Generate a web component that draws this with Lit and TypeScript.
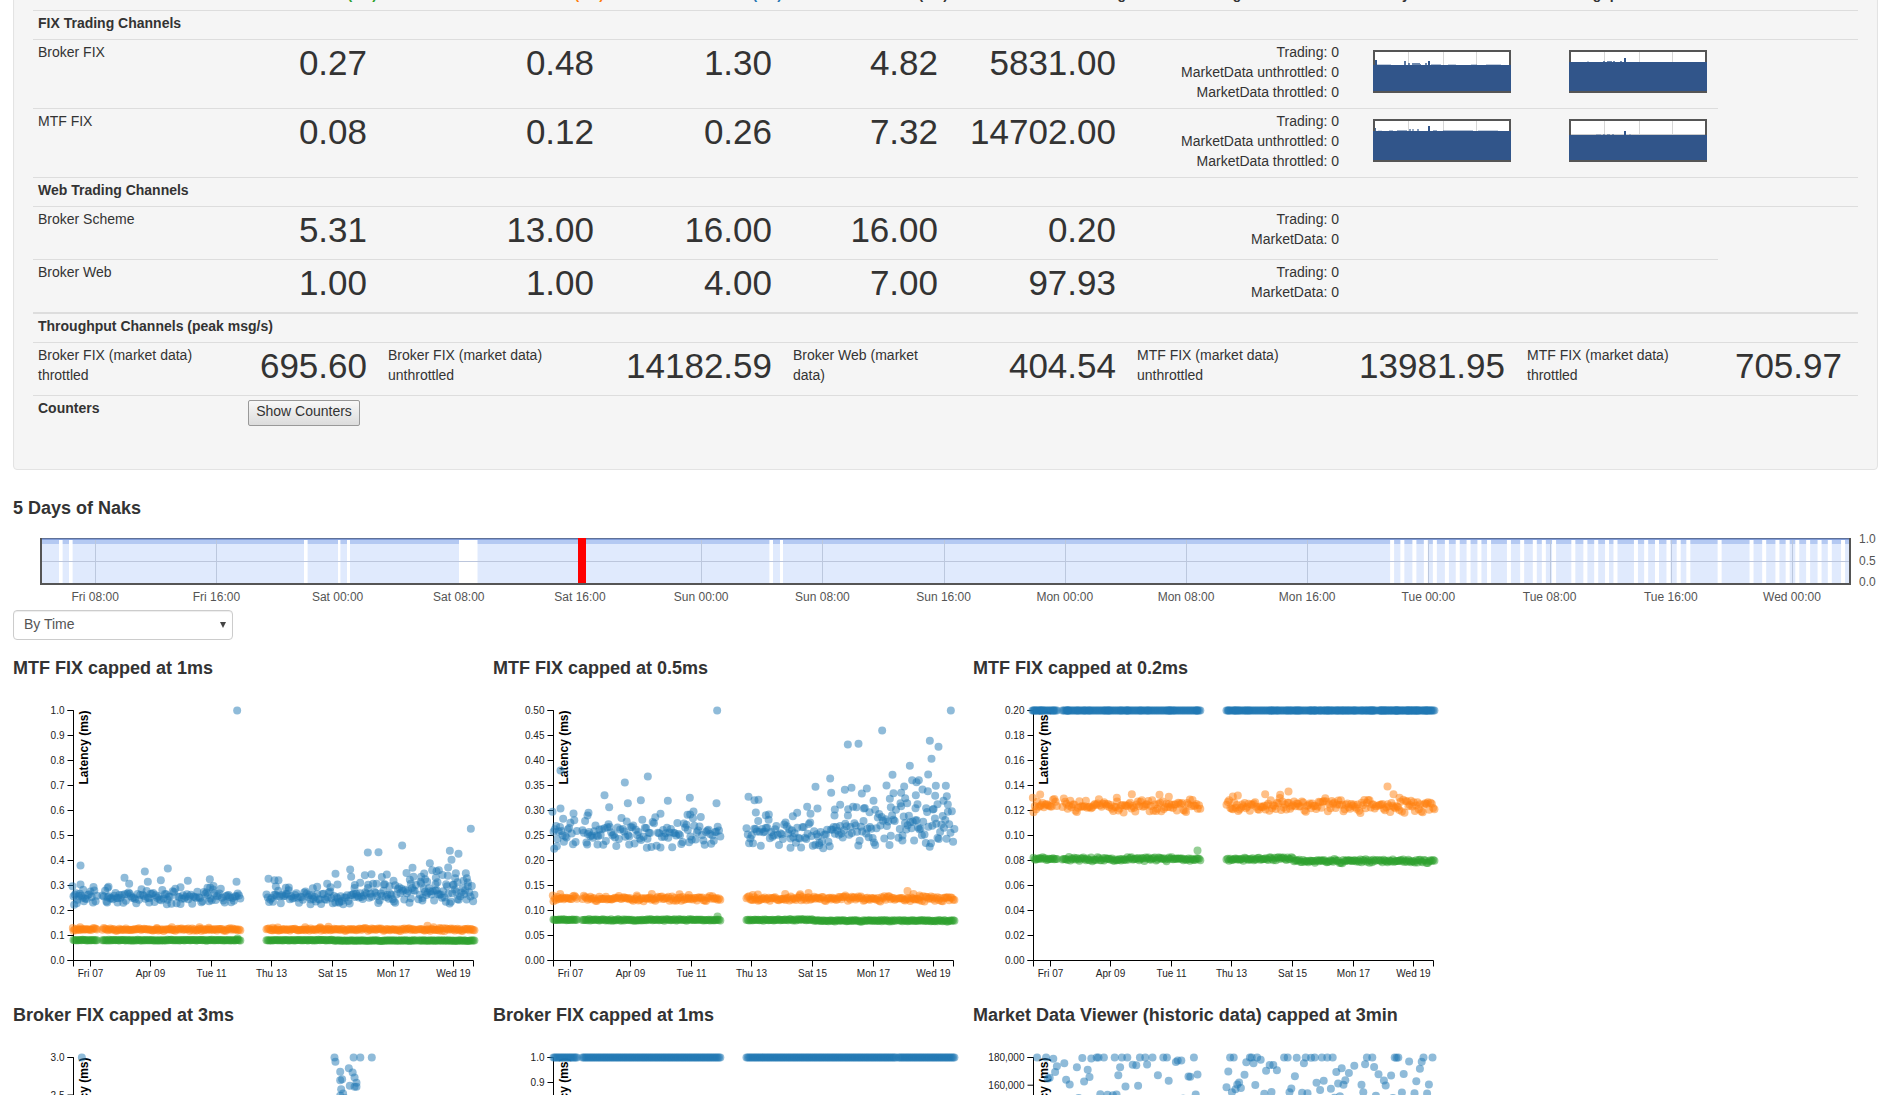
import { LitElement, css, html, svg, unsafeCSS } from 'lit';
import { customElement } from 'lit/decorators.js';

type Pt = [number, number];

const BLUE = '#1f77b4';
const ORANGE = '#ff7f0e';
const GREEN = '#2ca02c';

// small seeded generator so the scatter stays the same on every load
function rng(seed: number) {
  return () => {
    seed = (seed + 0x6d2b79f5) | 0;
    let t = Math.imul(seed ^ (seed >>> 15), 1 | seed);
    t = (t + Math.imul(t ^ (t >>> 7), 61 | t)) ^ t;
    return ((t ^ (t >>> 14)) >>> 0) / 4294967296;
  };
}

// x ranges of the data, px from the y axis
const SEGMENTS: Pt[] = [
  [0, 24],
  [29, 168],
  [193, 343],
  [345, 402],
];

function xs(step: number) {
  const out: number[] = [];
  for (const [a, b] of SEGMENTS) for (let x = a; x <= b; x += step) out.push(x);
  return out;
}

const r1 = rng(11);
const blueBand: Pt[] = xs(1.3).map((x) => {
  const late = x > 290;
  const spread = late ? 0.048 : 0.034;
  return [x, 0.256 + (late ? 0.016 : 0) + (r1() + r1() - 1) * spread];
});

// points above and below the main band, read off the 0.5ms chart
const blueOutliers: Pt[] = (
  [
    [711, -960], [1412, 50], [241, 270], [1206, 150], [1103, 192], [1135, 190], [1349, 181], [1375, 199],
    [1354, 235], [503, 288], [1237, 283], [1289, 256], [1050, 294], [434, 306], [1006, 319], [1344, 282],
    [1296, 299], [1316, 299], [1309, 305], [1114, 322], [1094, 328], [1160, 324], [1272, 318], [1367, 316],
    [1397, 316], [1219, 315], [373, 344], [482, 359], [563, 361], [629, 352], [709, 368], [805, 349],
    [823, 359], [835, 358], [1053, 337], [1145, 339], [1240, 338], [1263, 337], [1307, 344], [1327, 327],
    [1343, 332], [1365, 346], [1400, 347], [1229, 355], [1180, 361], [1275, 353], [1080, 373], [1064, 387],
    [1312, 371], [1261, 368], [1390, 361], [1372, 371], [1403, 372], [1232, 380], [1306, 383], [1129, 380],
    [1104, 386], [1151, 384], [1185, 388], [1358, 387], [1338, 383], [1281, 368], [981, 379], [1012, 384],
    [951, 397], [938, 407], [991, 400], [387, 380], [443, 368], [217, 394], [241, 384], [280, 399],
    [325, 397], [322, 405], [249, 415], [541, 400], [630, 402], [640, 393], [622, 403], [1063, 405],
    [1168, 395], [827, 396], [857, 404], [866, 402], [222, 505], [230, 497], [1267, 465], [931, 502],
    [1017, 494], [500, 502], [352, 492], [321, 492], [447, 492],
  ] as Pt[]
).map(([zx, zy]) => [(zx - 220) / 3, (840 - zy) / 1500]);

const blueData: Pt[] = [...blueBand, ...blueOutliers];

const r2 = rng(23);
const orangeData: Pt[] = [
  ...xs(1.3).map((x): Pt => [x, 0.124 + (r2() + r2() - 1) * 0.0065]),
  ...(
    [
      [515, 341], [598, 343], [626, 349], [985, 333], [1282, 318], [1300, 341], [960, 343], [915, 341],
      [1318, 352], [240, 342], [833, 345], [218, 352], [818, 348], [470, 352],
    ] as Pt[]
  ).map(([zx, zy]): Pt => [(zx - 220) / 3, ((840 - zy) / 750) * 0.2]),
];

const r3 = rng(37);
const greenData: Pt[] = [
  ...xs(1.3).map((x): Pt => [x, (x > 260 ? 0.0795 : 0.0812) + (r3() + r3() - 1) * 0.0018]),
  [164, 0.088],
];

function capped(data: Pt[], max: number): Pt[] {
  return data.map(([x, v]) => [x, 250 - (Math.min(v, max) / max) * 250]);
}

const r4 = rng(5);
const viewerPts: Pt[] = xs(1.8).map((x) => [x, r4() < 0.14 ? 0 : r4() * 70]);

// visible part of the 3ms chart; the rest sits below the fold
const fix3msPts: Pt[] = (
  [
    [85, 230], [349, 230], [369, 230], [376, 230], [388, 230], [350, 243], [364, 262], [355, 273], [368, 275],
    [370, 290], [355, 298], [357, 295], [372, 306], [365, 315], [370, 318], [356, 325], [372, 318], [358, 338],
    [355, 345], [360, 352], [366, 360],
  ] as Pt[]
).map(([zx, zy]) => [zx / 1.045 - 73, (zy - 230) / 3]);

interface Chart {
  title: string;
  ticks: string[];
  step: number;
  series: { color: string; pts: Pt[] }[];
}

function tickLabels(max: number, inc: number, digits: number) {
  const out: string[] = [];
  for (let v = max; v > -inc / 2; v -= inc) out.push(Math.abs(v).toFixed(digits));
  return out;
}

function latencySeries(max: number) {
  return [
    { color: BLUE, pts: capped(blueData, max) },
    { color: ORANGE, pts: capped(orangeData, max) },
    { color: GREEN, pts: capped(greenData, max) },
  ];
}

const CHARTS: Chart[] = [
  { title: 'MTF FIX capped at 1ms', ticks: tickLabels(1, 0.1, 1), step: 25, series: latencySeries(1) },
  { title: 'MTF FIX capped at 0.5ms', ticks: tickLabels(0.5, 0.05, 2), step: 25, series: latencySeries(0.5) },
  { title: 'MTF FIX capped at 0.2ms', ticks: tickLabels(0.2, 0.02, 2), step: 25, series: latencySeries(0.2) },
  {
    title: 'Broker FIX capped at 3ms',
    ticks: tickLabels(3, 0.5, 1),
    step: 37.5,
    series: [{ color: BLUE, pts: fix3msPts }],
  },
  {
    title: 'Broker FIX capped at 1ms',
    ticks: tickLabels(1, 0.1, 1),
    step: 25,
    series: [{ color: BLUE, pts: xs(1.3).map((x): Pt => [x, 0]) }],
  },
  {
    title: 'Market Data Viewer (historic data) capped at 3min',
    ticks: ['180,000', '160,000', '140,000', '120,000', '100,000', '80,000', '60,000', '40,000', '20,000', '0'],
    step: 27.7,
    series: [{ color: BLUE, pts: viewerPts }],
  },
];

const X_TICKS: [number, string][] = [
  [17, 'Fri 07'], [77, 'Apr 09'], [138, 'Tue 11'], [198, 'Thu 13'], [259, 'Sat 15'], [320, 'Mon 17'], [380, 'Wed 19'],
];

const NAK_TICKS = [
  'Fri 08:00', 'Fri 16:00', 'Sat 00:00', 'Sat 08:00', 'Sat 16:00', 'Sun 00:00', 'Sun 08:00', 'Sun 16:00',
  'Mon 00:00', 'Mon 08:00', 'Mon 16:00', 'Tue 00:00', 'Tue 08:00', 'Tue 16:00', 'Wed 00:00',
];

// [left, width] of the empty stretches, page px
const NAK_GAPS: Pt[] = [
  [59, 3.6], [69, 3.6], [304, 3.6], [338, 2.4], [347, 3], [459, 18.5], [769.4, 3.6], [780, 3],
  ...[741, 758, 778, 797, 812, 832, 850, 868, 886, 902, 935, 957, 978, 993, 1010, 1042, 1062, 1080, 1098, 1112,
    1146, 1163, 1181, 1200, 1217, 1233, 1285, 1338, 1359, 1381, 1398, 1414, 1432, 1451, 1468, 1490].map(
    (z): Pt => [944 + z / 1.661, 4]
  ),
];

interface Spark {
  top: number;
  bumps: [number, number, number, number][];
  edge?: boolean;
}

const SPARKS: Spark[][] = [
  [
    {
      top: 15,
      bumps: [
        [2, 2, 5, 1], [3, 15, 1, 0.3], [31, 2, 4, 0.8], [35, 2, 2, 0.7], [39, 8, 2, 0.7], [47, 1, 1, 0.7],
        [52, 2, 2, 0.7], [55, 2, 4, 1], [58, 10, 1, 0.4], [75, 8, 1, 0.3], [98, 6, 1, 0.3], [113, 15, 1, 0.3],
      ],
    },
    {
      top: 12,
      bumps: [[18, 2, 1, 0.3], [34, 2, 1, 0.7], [38, 5, 1, 0.7], [44, 2, 1, 0.7], [51, 2, 1, 0.7], [55, 2, 4, 1]],
    },
  ],
  [
    {
      top: 12,
      bumps: [
        [2, 1, 3, 0.9], [5, 4, 1, 0.2], [16, 4, 1, 0.4], [24, 10, 1, 0.5], [36, 2, 2, 0.6], [39, 2, 2, 0.5],
        [44, 2, 2, 0.6], [55, 2, 5, 1], [60, 4, 1, 0.5], [70, 30, 1, 0.4], [105, 20, 1, 0.3],
      ],
    },
    {
      top: 16,
      edge: true,
      bumps: [[27, 5, 1, 0.3], [34, 2, 1, 0.5], [38, 3, 1, 0.5], [43, 2, 1, 0.5], [55, 2, 4, 1], [60, 2, 1, 0.3]],
    },
  ],
];

function sparkline(s: Spark) {
  return html`<svg class="spark" width="138" height="43" viewBox="0 0 138 43">
    <rect width="138" height="43" fill="#fff"></rect>
    ${[35, 70, 103].map((x) => svg`<rect x=${x} y="2" width="1" height="40" fill="#d6d6d6"></rect>`)}
    ${s.edge ? svg`<rect x="2" y=${s.top - 1} width="134" height="1" fill="#ccc"></rect>` : ''}
    ${s.bumps.map(
      ([x, w, h, o]) =>
        svg`<rect x=${x} y=${s.top - h} width=${w} height=${h} fill="#31558a" opacity=${o}></rect>`
    )}
    <rect x="0" y=${s.top} width="138" height=${43 - s.top} fill="#31558a"></rect>
    <rect x="0" y="0" width="138" height="2" fill="#555"></rect>
    <rect x="0" y="41" width="138" height="2" fill="#555"></rect>
    <rect x="0" y="0" width="2" height=${s.top} fill="#555"></rect>
    <rect x="136" y="0" width="2" height=${s.top} fill="#555"></rect>
  </svg>`;
}

function scatter(c: Chart) {
  const tickY = c.ticks.map((_, i) => i * c.step);
  return html`<div class="chart">
    <h4>${c.title}</h4>
    <svg width="480" height="327" viewBox="0 0 480 327">
      <g transform="translate(60.5,32.5)">
        <path d="M-6,0H0V250H-6" class="axis"></path>
        ${c.ticks.map(
          (t, i) => svg`<line x1="-6" x2="0" y1=${tickY[i]} y2=${tickY[i]} class="axis"></line>
            <text x="-9" y=${tickY[i] + 3.5} text-anchor="end" class="tick">${t}</text>`
        )}
        <text transform="rotate(-90)" y="14.5" text-anchor="end" class="ylabel">Latency (ms)</text>
        <path d="M0,6V0H400V6" class="axis" transform="translate(0,250)"></path>
        ${X_TICKS.map(
          ([x, t]) => svg`<line x1=${x} x2=${x} y1="250" y2="256" class="axis"></line>
            <text x=${x} y="266" text-anchor="middle" class="tick">${t}</text>`
        )}
        ${c.series.map((s) =>
          s.pts.map(([x, y]) => svg`<circle cx=${x} cy=${y} r="4" fill=${s.color} opacity="0.5"></circle>`)
        )}
      </g>
    </svg>
  </div>`;
}

function nakChart() {
  const ox = 13;
  const tick = (k: number) => 95.2 + 121.2 * k - ox;
  return html`<svg class="naks" width="1875" height="80" viewBox="0 0 1875 80">
    <rect x="27" y="8" width="1811" height="47" fill="#555"></rect>
    <rect x="29" y="8" width="1807" height="45" fill="#e0eafd"></rect>
    <rect x="29" y="8" width="1807" height="1" fill="#5f7198"></rect>
    <rect x="29" y="9" width="1807" height="1" fill="#7f9bd8"></rect>
    <rect x="29" y="10" width="1807" height="4" fill="#b4c9f2"></rect>
    ${NAK_TICKS.map((_, k) => svg`<rect x=${Math.round(tick(k))} y="10" width="1" height="43" fill="#bcc8de"></rect>`)}
    ${NAK_GAPS.map(([x, w]) => svg`<rect x=${x - ox} y="10" width=${w} height="43" fill="#fff"></rect>`)}
    <rect x="29" y="31" width="1807" height="1" fill="#bcc6dc"></rect>
    <rect x=${578 - ox} y="8" width="8" height="45" fill="#f00"></rect>
    ${NAK_TICKS.map(
      (t, k) => svg`<text x=${tick(k)} y="71" text-anchor="middle" class="naktick">${t}</text>`
    )}
    <text x="1846" y="13" class="naktick">1.0</text>
    <text x="1846" y="35" class="naktick">0.5</text>
    <text x="1846" y="56" class="naktick">0.0</text>
  </svg>`;
}

@customElement('app-root')
export class AppRoot extends LitElement {
  static styles = css`
    :host {
      display: block;
      height: 1095px;
      overflow: hidden;
      font-family: 'Liberation Sans', Arial, sans-serif;
      font-size: 14px;
      line-height: 20px;
      color: #333;
      background: #fff;
    }
    .page {
      margin-top: -40px;
      padding: 0 10px 0 13px;
    }
    .well {
      background: #f5f5f5;
      border: 1px solid #e3e3e3;
      border-radius: 4px;
      padding: 19px;
      box-shadow: inset 0 1px 1px rgba(0, 0, 0, 0.05);
    }
    .row {
      display: grid;
      grid-template-columns: 167px 172px 227px 178px 166px 178px 223px 196px 178px 141px;
      border-top: 1px solid #ddd;
      padding: 2px 0 6px;
    }
    .short {
      width: 1685px;
    }
    .header {
      border-top: 0;
      height: 30px;
      padding: 0;
      font-weight: bold;
      align-items: end;
    }
    .header span {
      text-align: right;
      white-space: nowrap;
      margin-right: -5px;
      padding-bottom: 6px;
    }
    .header .g {
      color: ${unsafeCSS(GREEN)};
    }
    .header .o {
      color: ${unsafeCSS(ORANGE)};
    }
    .header .b {
      color: ${unsafeCSS(BLUE)};
    }
    .header .mid {
      margin-right: 0;
      text-align: center;
    }
    .header .left {
      margin-right: 0;
      text-align: left;
      padding-left: 13px;
    }
    .section {
      display: block;
      font-weight: bold;
      padding: 2px 5px 6px;
    }
    .thick {
      border-top-width: 2px;
      padding-bottom: 6px;
    }
    .name {
      padding-left: 5px;
    }
    .num {
      font-size: 35px;
      line-height: 42px;
      margin-bottom: 2px;
      text-align: right;
      padding-right: 5px;
    }
    .counts {
      text-align: right;
      padding-right: 5px;
    }
    .spark-cell {
      padding-left: 29px;
    }
    .spark {
      display: block;
      margin-top: 8px;
    }
    .through {
      grid-template-columns: 182px 157px 218px 187px 173px 171px 199px 190px 190px 147px;
    }
    .through .label {
      padding-left: 16px;
    }
    .through .label:first-child {
      padding-left: 5px;
    }
    .through .label:nth-child(9) {
      padding-left: 17px;
    }
    .counters {
      grid-template-columns: 215px 1fr;
      padding: 2px 0 0;
      height: 52px;
      box-sizing: content-box;
      font-weight: bold;
    }
    .counters .name {
      font-weight: bold;
    }
    button {
      display: block;
      width: 112px;
      height: 26px;
      margin-top: 2px;
      padding: 0 0 4px;
      border: 1px solid #999;
      border-radius: 2px;
      background: linear-gradient(#f8f8f8, #dcdcdc);
      font: 14px 'Liberation Sans', Arial, sans-serif;
      color: #333;
    }
    h3 {
      margin: 28px 0 12px;
      font-size: 18px;
      line-height: 20px;
      font-weight: bold;
    }
    .naks {
      display: block;
    }
    .naktick {
      font-size: 12px;
      fill: #545454;
    }
    .select {
      position: relative;
      width: 220px;
      height: 30px;
      margin-bottom: 18px;
    }
    select {
      appearance: none;
      display: block;
      box-sizing: border-box;
      width: 100%;
      height: 30px;
      padding: 0 10px 2px;
      border: 1px solid #ccc;
      border-radius: 4px;
      background: #fff;
      color: #555;
      font: 14px 'Liberation Sans', Arial, sans-serif;
      box-shadow: inset 0 1px 1px rgba(0, 0, 0, 0.075);
    }
    .select::after {
      content: '';
      position: absolute;
      right: 7px;
      top: 12px;
      border: 3px solid transparent;
      border-top: 6px solid #444;
      border-bottom: 0;
    }
    .charts {
      display: grid;
      grid-template-columns: repeat(3, 480px);
    }
    h4 {
      margin: 0;
      font-size: 18px;
      line-height: 20px;
      font-weight: bold;
    }
    .chart svg {
      display: block;
      overflow: visible;
    }
    .axis {
      fill: none;
      stroke: #000;
      stroke-width: 1;
    }
    .tick {
      font-size: 10px;
      fill: #222;
    }
    .ylabel {
      font-size: 12px;
      font-weight: bold;
      fill: #000;
    }
  `;

  private numbers(vals: string[]) {
    return vals.map((v) => html`<div class="num">${v}</div>`);
  }

  private lines(items: string[]) {
    return html`<div class="counts">${items.map((t) => html`<div>${t}</div>`)}</div>`;
  }

  private throughputCell(label: string, value: string) {
    return html`<div class="label">${label}</div>
      <div class="num">${value}</div>`;
  }

  render() {
    const fixLines = ['Trading: 0', 'MarketData unthrottled: 0', 'MarketData throttled: 0'];
    const webLines = ['Trading: 0', 'MarketData: 0'];
    return html`<div class="page">
      <div class="well">
        <div class="row header">
          <span></span>
          <span class="g">50th (ms)</span>
          <span class="o">90th (ms)</span>
          <span class="b">99th (ms)</span>
          <span>Max (ms)</span>
          <span>Avg</span>
          <span class="mid">Pending Naks</span>
          <span class="left">Latency</span>
          <span class="left">Throughput</span>
          <span></span>
        </div>
        <div class="row section">FIX Trading Channels</div>
        <div class="row">
          <div class="name">Broker FIX</div>
          ${this.numbers(['0.27', '0.48', '1.30', '4.82', '5831.00'])} ${this.lines(fixLines)}
          <div class="spark-cell">${sparkline(SPARKS[0][0])}</div>
          <div class="spark-cell">${sparkline(SPARKS[0][1])}</div>
        </div>
        <div class="row short">
          <div class="name">MTF FIX</div>
          ${this.numbers(['0.08', '0.12', '0.26', '7.32', '14702.00'])} ${this.lines(fixLines)}
          <div class="spark-cell">${sparkline(SPARKS[1][0])}</div>
          <div class="spark-cell">${sparkline(SPARKS[1][1])}</div>
        </div>
        <div class="row section">Web Trading Channels</div>
        <div class="row">
          <div class="name">Broker Scheme</div>
          ${this.numbers(['5.31', '13.00', '16.00', '16.00', '0.20'])} ${this.lines(webLines)}
        </div>
        <div class="row short">
          <div class="name">Broker Web</div>
          ${this.numbers(['1.00', '1.00', '4.00', '7.00', '97.93'])} ${this.lines(webLines)}
        </div>
        <div class="row section thick">Throughput Channels (peak msg/s)</div>
        <div class="row through">
          ${this.throughputCell('Broker FIX (market data) throttled', '695.60')}
          ${this.throughputCell('Broker FIX (market data) unthrottled', '14182.59')}
          ${this.throughputCell('Broker Web (market data)', '404.54')}
          ${this.throughputCell('MTF FIX (market data) unthrottled', '13981.95')}
          ${this.throughputCell('MTF FIX (market data) throttled', '705.97')}
        </div>
        <div class="row counters">
          <div class="name">Counters</div>
          <div><button>Show Counters</button></div>
        </div>
      </div>
      <h3>5 Days of Naks</h3>
      ${nakChart()}
      <div class="select">
        <select>
          <option>By Time</option>
        </select>
      </div>
      <div class="charts">${CHARTS.map((c) => scatter(c))}</div>
    </div>`;
  }
}
